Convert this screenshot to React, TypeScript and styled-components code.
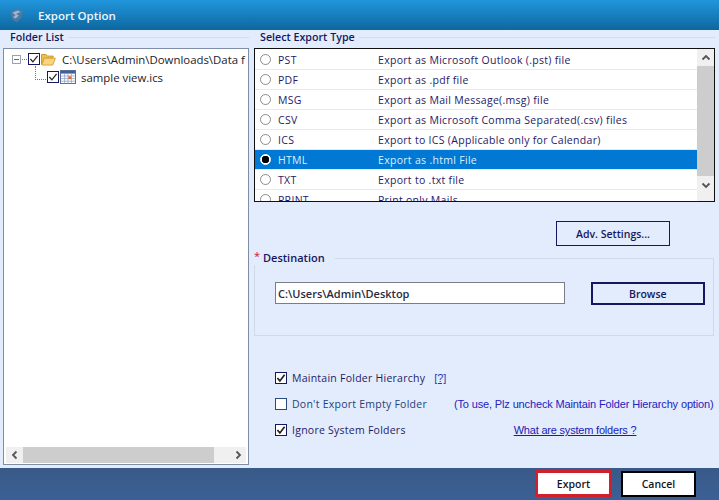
import React, {FC} from 'react';
import styled, {createGlobalStyle} from "styled-components";

const ink = '#1f1a66'
const navy = '#14185e'

const exportTypes = [
    {code: 'PST', text: 'Export as Microsoft Outlook (.pst) file'},
    {code: 'PDF', text: 'Export as .pdf file'},
    {code: 'MSG', text: 'Export as Mail Message(.msg) file'},
    {code: 'CSV', text: 'Export as Microsoft Comma Separated(.csv) files'},
    {code: 'ICS', text: 'Export to ICS (Applicable only for Calendar)'},
    {code: 'HTML', text: 'Export as .html File'},
    {code: 'TXT', text: 'Export to .txt file'},
    {code: 'PRINT', text: 'Print only Mails'},
]

const Check: FC<{checked?: boolean, color?: string, stroke?: number}> = ({checked, color = navy, stroke = 1.7}) => (
    <svg width="12" height="12" viewBox="0 0 12 12" style={{flex: 'none', display: 'block'}}>
        <rect x=".5" y=".5" width="11" height="11" fill="#fff" stroke={color}/>
        {checked && <path d="M2.4 6 4.9 8.9 9.6 2.8" fill="none" stroke="#222" strokeWidth={stroke}/>}
    </svg>
)

const FolderIcon = () => (
    <svg width="15" height="13" viewBox="0 0 15 13" style={{flex: 'none'}}>
        <path d="M.5 11.5V1.5h4.6l1.4 1.6h5.6v2H3.2L.5 11.5z" fill="#f0bf52" stroke="#cf9a2e"/>
        <path d="M.8 12 3.4 5.2h11l-2.6 6.8H.8z" fill="#fad57e" stroke="#d9a63a"/>
    </svg>
)

const CalendarIcon = () => (
    <svg width="16" height="14" viewBox="0 0 16 14" style={{flex: 'none'}}>
        <rect x=".5" y=".5" width="15" height="13" fill="#fff" stroke="#5a6f96"/>
        <rect x="1" y="1" width="14" height="2.6" fill="#3f5f9e"/>
        <path d="M1 6h14M1 8.6h14M1 11.2h14M4.6 3.6V13.5M8 3.6V13.5M11.4 3.6V13.5" stroke="#8fa3c6" strokeWidth=".8"/>
        <rect x="8.4" y="6.4" width="2.8" height="2.6" fill="#e2682a"/>
    </svg>
)

const Logo = () => (
    <svg width="17" height="17" viewBox="0 0 17 17">
        <path d="M2 5 9 1.5l6 2-1.5 7-5 5-4-3z" fill="#4a7ba6"/>
        <path d="M4.5 5.5 10 3.5 12.5 5 8 7l3 1.5-3.5 3L5 10l2.5-1.5z" fill="#9fb6cc"/>
    </svg>
)

const Chevron: FC<{dir: 'up' | 'down' | 'left' | 'right'}> = ({dir}) => {
    const paths = {
        up: 'M1.5 6.5 5 3l3.5 3.5',
        down: 'M1.5 3.5 5 7l3.5-3.5',
        left: 'M6.5 1.5 3 5l3.5 3.5',
        right: 'M3.5 1.5 7 5 3.5 8.5',
    }
    return (
        <svg width="10" height="10" viewBox="0 0 10 10">
            <path d={paths[dir]} fill="none" stroke="#555" strokeWidth="1.8"/>
        </svg>
    )
}

const App: FC = () => {
    return (
        <Window>
            <GlobalStyle/>
            <TitleBar>
                <LogoSlot><Logo/></LogoSlot>
                <Title>Export Option</Title>
            </TitleBar>
            <Body>
                <LeftPane>
                    <PaneLabel>Folder List</PaneLabel>
                    <TreeBox>
                        <TreeArea>
                            <TreeRow>
                                <Expander/>
                                <HLine $width={5}/>
                                <Check checked stroke={1.2}/>
                                <FolderIcon/>
                                <TreeText>C:\Users\Admin\Downloads\Data f</TreeText>
                            </TreeRow>
                            <TreeRow $child>
                                <Elbow/>
                                <Check checked stroke={1.2}/>
                                <CalendarIcon/>
                                <TreeText $child>sample view.ics</TreeText>
                            </TreeRow>
                        </TreeArea>
                        <HScroll>
                            <ScrollEnd $width={17}><Chevron dir="left"/></ScrollEnd>
                            <HThumb/>
                            <ScrollEnd $width={32} $alignEnd><Chevron dir="right"/></ScrollEnd>
                        </HScroll>
                    </TreeBox>
                </LeftPane>
                <RightPane>
                    <PaneLabel $tight>Select Export Type</PaneLabel>
                    <ListBox>
                        <ListRows>
                            {exportTypes.map(item => (
                                <ListRow key={item.code} $selected={item.code === 'HTML'}>
                                    <Radio $selected={item.code === 'HTML'}/>
                                    <Code>{item.code}</Code>
                                    <span>{item.text}</span>
                                </ListRow>
                            ))}
                        </ListRows>
                        <VScroll>
                            <VEnd><Chevron dir="up"/></VEnd>
                            <VThumb/>
                            <VEnd><Chevron dir="down"/></VEnd>
                        </VScroll>
                    </ListBox>
                    <AdvRow>
                        <AdvButton>Adv. Settings...</AdvButton>
                    </AdvRow>
                    <DestinationGroup>
                        <Legend><Star>*</Star><LegendText>Destination</LegendText></Legend>
                        <PathInput readOnly value="C:\Users\Admin\Desktop"/>
                        <BrowseButton>Browse</BrowseButton>
                    </DestinationGroup>
                    <Options>
                        <OptionRow>
                            <Check checked/>
                            <OptionLabel>Maintain Folder Hierarchy</OptionLabel>
                            <HelpLink>[?]</HelpLink>
                        </OptionRow>
                        <OptionRow>
                            <Check color="#2a4a80"/>
                            <OptionLabel $muted>Don't Export Empty Folder</OptionLabel>
                            <Hint>(To use, Plz uncheck Maintain Folder Hierarchy option)</Hint>
                        </OptionRow>
                        <OptionRow>
                            <Check checked/>
                            <OptionLabel>Ignore System Folders</OptionLabel>
                            <SystemLink>What are system folders ?</SystemLink>
                        </OptionRow>
                    </Options>
                </RightPane>
            </Body>
            <Footer>
                <FooterButton $primary>Export</FooterButton>
                <FooterButton>Cancel</FooterButton>
            </Footer>
        </Window>
    );
};

const GlobalStyle = createGlobalStyle`
  html, body {
    margin: 0;
    padding: 0;
  }
  * {
    box-sizing: border-box;
  }
`

const Window = styled.div`
  width: 719px;
  height: 500px;
  display: flex;
  flex-direction: column;
  overflow: hidden;
  background: #e3ecfc;
  font-family: "Open Sans", "Noto Sans", sans-serif;
  font-size: 10.5px;
  color: ${ink};
`

const TitleBar = styled.div`
  height: 30px;
  flex: none;
  display: flex;
  align-items: center;
  background: linear-gradient(#2196dc, #0e679f);
`

const LogoSlot = styled.div`
  width: 38px;
  padding-left: 8px;
  display: flex;
`

const Title = styled.div`
  color: #eaf6ff;
  font-size: 11.5px;
  font-weight: 600;
`

const Body = styled.div`
  flex: 1;
  display: flex;
  min-height: 0;
`

const LeftPane = styled.div`
  width: 251px;
  flex: none;
  padding: 0 2px 3px 3px;
  display: flex;
  flex-direction: column;
`

const PaneLabel = styled.div<{ $tight?: boolean }>`
  height: 18px;
  flex: none;
  display: flex;
  gap: 4px;
  padding-left: ${p => p.$tight ? '6px' : '7px'};
  line-height: 14px;
  font-size: 10.7px;
  font-weight: 600;
  color: ${navy};

  &::after {
    content: '';
    flex: 1;
    height: 1px;
    margin-top: 7px;
    background: #d3dcea;
  }
`

const TreeBox = styled.div`
  flex: 1;
  display: flex;
  flex-direction: column;
  background: #fff;
  border: 1px solid #7f8ea6;
  min-height: 0;
`

const TreeArea = styled.div`
  flex: 1;
  padding: 1px 0 0 8px;
  overflow: hidden;
`

const TreeRow = styled.div<{ $child?: boolean }>`
  height: 18px;
  display: flex;
  align-items: center;
  gap: 1px;
  padding-left: ${p => p.$child ? '34px' : '0'};
  white-space: nowrap;
`

const Expander = styled.span`
  width: 9px;
  height: 9px;
  flex: none;
  border: 1px solid #9aa3ad;
  background: linear-gradient(90deg, transparent 1px, #666 1px, #666 6px, transparent 6px) center / 100% 1px no-repeat;
`

const HLine = styled.span<{ $width: number }>`
  width: ${p => p.$width}px;
  flex: none;
  border-top: 1px dotted #777;
`

const Elbow = styled.span`
  width: 11px;
  height: 14px;
  flex: none;
  margin: -8px 0 0 -11px;
  border-left: 1px dotted #777;
  border-bottom: 1px dotted #777;
`

const TreeText = styled.span<{ $child?: boolean }>`
  margin-left: ${p => p.$child ? '4px' : '5px'};
  font-size: 11.4px;
  color: #1b1b2a;
`

const HScroll = styled.div`
  height: 16px;
  flex: none;
  margin: 0 2px 1px 2px;
  display: flex;
  background: #f0f0f0;
`

const ScrollEnd = styled.div<{ $width: number, $alignEnd?: boolean }>`
  width: ${p => p.$width}px;
  flex: none;
  display: flex;
  align-items: center;
  justify-content: ${p => p.$alignEnd ? 'flex-end' : 'center'};
  padding-right: ${p => p.$alignEnd ? '3px' : '0'};
`

const HThumb = styled.div`
  flex: 1;
  background: #cdcdcd;
`

const RightPane = styled.div`
  flex: 1;
  display: flex;
  flex-direction: column;
  padding: 0 4px 0 3px;
  min-width: 0;
`

const ListBox = styled.div`
  height: 154px;
  flex: none;
  display: flex;
  background: #fff;
  border: 1px solid #111;
`

const ListRows = styled.div`
  flex: 1;
  padding-top: 1px;
  overflow: hidden;
  min-width: 0;
`

const ListRow = styled.div<{ $selected?: boolean }>`
  height: 20px;
  display: flex;
  align-items: center;
  padding-left: 5px;
  white-space: nowrap;
  letter-spacing: .3px;
  border-bottom: 1px solid #e3ecf6;
  background: ${p => p.$selected ? '#0078d4' : 'transparent'};
  color: ${p => p.$selected ? '#dff0ff' : ink};
`

const Radio = styled.span<{ $selected?: boolean }>`
  width: 11px;
  height: 11px;
  flex: none;
  border-radius: 50%;
  border: 1px solid ${p => p.$selected ? '#fff' : '#8a8a8a'};
  background: ${p => p.$selected ? 'radial-gradient(circle, #000 3.5px, #fff 4px)' : '#fff'};
`

const Code = styled.span`
  width: 100px;
  flex: none;
  margin-left: 7px;
`

const VScroll = styled.div`
  width: 17px;
  flex: none;
  display: flex;
  flex-direction: column;
  background: #f0f0f0;
`

const VEnd = styled.div`
  height: 17px;
  flex: none;
  display: flex;
  align-items: center;
  justify-content: center;
`

const VThumb = styled.div`
  height: 110px;
  flex: none;
  background: #cdcdcd;
`

const AdvRow = styled.div`
  height: 56px;
  flex: none;
  padding: 19px 0 0 302px;
`

const BaseButton = styled.button`
  padding: 0;
  background: transparent;
  font-family: inherit;
  font-size: 10.5px;
  font-weight: 600;
  color: ${navy};
`

const AdvButton = styled(BaseButton)`
  width: 114px;
  height: 25px;
  border: 1px solid ${navy};
`

const DestinationGroup = styled.div`
  position: relative;
  height: 78px;
  flex: none;
  margin-right: 1px;
  padding: 23px 8px 0 20px;
  display: flex;
  align-items: flex-start;
  border: 1px solid #d0dae6;
`

const Legend = styled.div`
  position: absolute;
  left: -1px;
  top: -8px;
  display: flex;
  padding-right: 10px;
  background: #e3ecfc;
`

const Star = styled.span`
  width: 9px;
  color: #d0103a;
  font-size: 11px;
  line-height: 10px;
`

const LegendText = styled.span`
  font-size: 11px;
  font-weight: 600;
  line-height: 14px;
  color: ${navy};
`

const PathInput = styled.input`
  width: 291px;
  height: 22px;
  padding: 0 2px;
  border: 1px solid #7d7d85;
  background: #fff;
  font-family: inherit;
  font-size: 11px;
  font-weight: 600;
  color: #2a2a3c;
  outline: none;
`

const BrowseButton = styled(BaseButton)`
  width: 115px;
  height: 23px;
  margin-left: 26px;
  border: 2px solid ${navy};
`

const Options = styled.div`
  padding: 36px 0 0 21px;
  display: flex;
  flex-direction: column;
  gap: 14px;
`

const OptionRow = styled.div`
  height: 12px;
  display: flex;
  align-items: center;
  white-space: nowrap;
`

const OptionLabel = styled.span<{ $muted?: boolean }>`
  margin-left: 5px;
  letter-spacing: .25px;
  color: ${p => p.$muted ? '#24407a' : ink};
`

const HelpLink = styled.a`
  margin-left: 9px;
  font-family: "Liberation Sans", sans-serif;
  font-size: 11px;
  color: #1a3fc4;
  text-decoration: underline;
`

const Hint = styled.span`
  margin-left: 27px;
  font-family: "Liberation Sans", sans-serif;
  font-size: 11px;
  letter-spacing: -.14px;
  color: #2222c0;
`

const SystemLink = styled.a`
  margin-left: 108px;
  font-family: "Liberation Sans", sans-serif;
  font-size: 11px;
  letter-spacing: -.2px;
  color: #1a1ab4;
  text-decoration: underline;
`

const Footer = styled.div`
  height: 32px;
  flex: none;
  display: flex;
  justify-content: flex-end;
  align-items: flex-end;
  gap: 9px;
  padding: 0 23px 3px 0;
  background: linear-gradient(#395a88, #3c6095);
`

const FooterButton = styled.button<{ $primary?: boolean }>`
  width: ${p => p.$primary ? '77px' : '75px'};
  height: ${p => p.$primary ? '27px' : '26px'};
  padding: 0;
  background: #fff;
  font-family: inherit;
  font-size: 10.5px;
  font-weight: 600;
  color: #15151f;
  border: ${p => p.$primary ? '3px solid #d0202e' : '2px solid #000'};
`

export default App;
